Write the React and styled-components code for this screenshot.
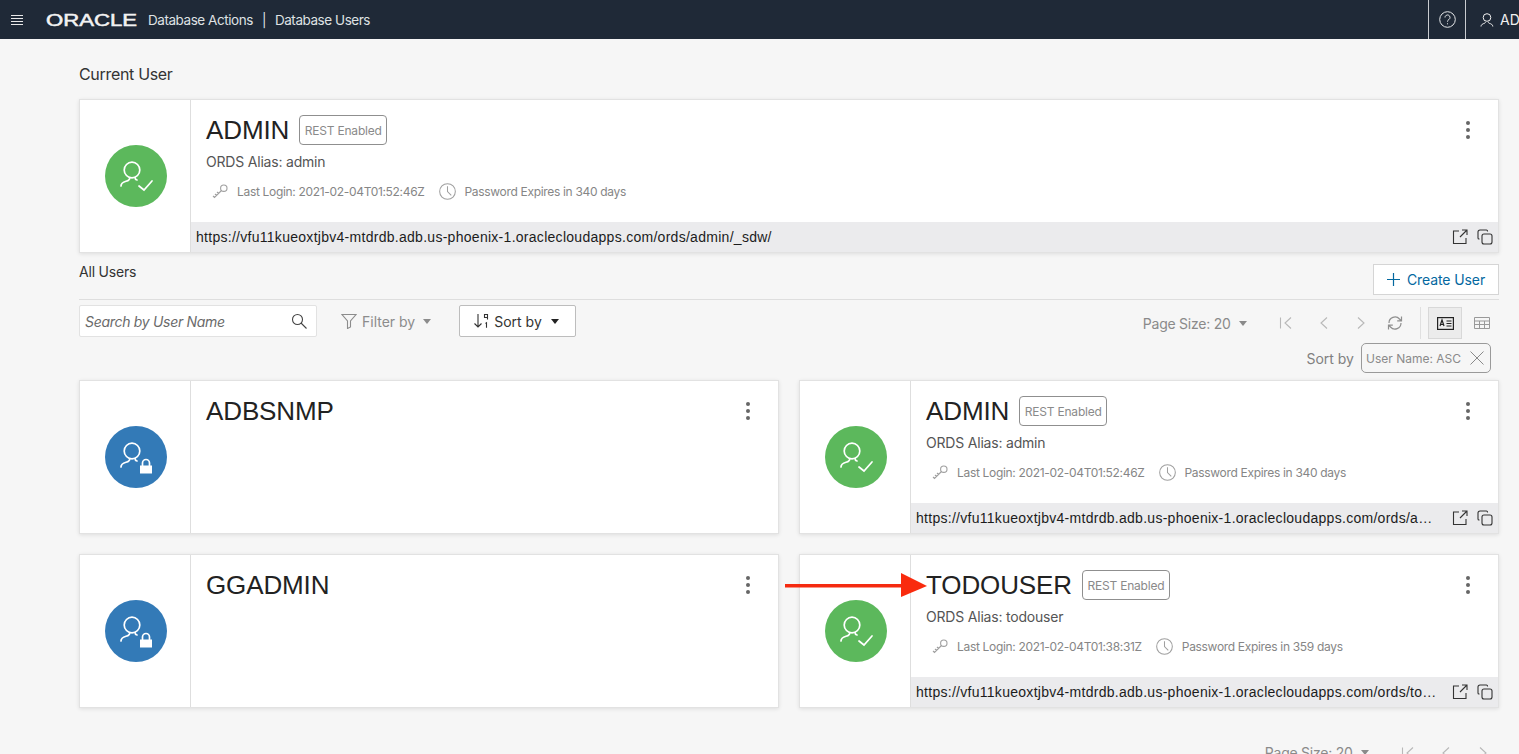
import styled, { createGlobalStyle } from 'styled-components'

const GlobalStyle = createGlobalStyle`
  html, body {
    margin: 0;
    height: 754px;
    overflow: hidden;
    background: #f6f6f6;
    font-family: Inter, "Liberation Sans", sans-serif;
  }
  * { box-sizing: border-box; }
`

const Header = styled.header`
  height: 39px;
  display: flex;
  align-items: center;
  background: #1f2937;
  color: #e6e8ea;
  overflow: hidden;
`
const Burger = styled.div`
  width: 12px;
  height: 10px;
  margin: 0 23px 0 11px;
  color: #e8e8e8;
  display: flex;
`
const Logo = styled.svg`
  width: 97px;
  height: 14px;
  flex: none;
`
const Crumbs = styled.div`
  margin-left: 5px;
  font-size: 13.5px;
  letter-spacing: -0.45px;
  white-space: pre;
  color: #dfe1e3;
`
const CrumbSep = styled.span`
  margin: 0 9px;
`
const HeaderCell = styled.div`
  height: 39px;
  flex: none;
  display: flex;
  align-items: center;
  justify-content: center;
  border-left: 1px solid #c9ccd0;
  width: 37px;
  margin-left: auto;
`
const HeaderUser = styled.div`
  flex: none;
  display: flex;
  align-items: center;
  gap: 6px;
  padding-left: 14px;
  height: 39px;
  width: 54px;
  border-left: 1px solid #c9ccd0;
  font-size: 14px;
  color: #f0f0f0;
`
const Main = styled.main`
  padding: 0 20px 0 79px;
`
const SectionTitle = styled.div`
  margin-top: 25px;
  margin-bottom: 15px;
  height: 20px;
  font-size: 16px;
  line-height: 20px;
  letter-spacing: -0.32px;
  color: #333;
`
const Card = styled.article`
  position: relative;
  height: 154px;
  display: flex;
  background: #fff;
  border: 1px solid #e2e2e2;
  box-shadow: 0 1px 4px rgba(0, 0, 0, 0.1);
`
const AvatarPane = styled.div`
  flex: none;
  width: 111px;
  padding-left: 2px;
  display: flex;
  align-items: center;
  justify-content: center;
  border-right: 1px solid #dedede;
`
const Avatar = styled.div`
  width: 62px;
  height: 62px;
  border-radius: 50%;
  background: ${(p) => (p.$locked ? '#337ab7' : '#5cb85c')};
`
const CardMain = styled.div`
  flex: 1;
  min-width: 0;
  display: flex;
  flex-direction: column;
`
const CardBody = styled.div`
  position: relative;
  flex: 1;
  padding: 15px 15px 0;
`
const TitleRow = styled.div`
  display: flex;
  align-items: center;
  gap: 10px;
  height: 30px;
`
const UserName = styled.h2`
  margin: 0;
  font-family: "Liberation Sans", Arial, sans-serif;
  font-size: 26px;
  font-weight: 400;
  line-height: 32px;
  letter-spacing: -0.12px;
  color: #222;
`
const Badge = styled.span`
  height: 30px;
  width: 88px;
  display: flex;
  align-items: center;
  justify-content: center;
  border: 1px solid #8f8f8f;
  border-radius: 4px;
  font-size: 12px;
  letter-spacing: -0.2px;
  color: #8a8a8a;
`
const Alias = styled.div`
  margin-top: 7px;
  height: 20px;
  font-size: 14px;
  line-height: 20px;
  letter-spacing: -0.2px;
  color: #555;
`
const MetaRow = styled.div`
  margin-top: 11px;
  padding-left: 6px;
  display: flex;
  align-items: center;
  font-size: 12px;
  letter-spacing: -0.32px;
  color: #868686;
`
const MetaItem = styled.span`
  display: flex;
  align-items: center;
  gap: 9px;
  margin-right: 14px;
  & > svg {
    color: #a0a0a0;
  }
`
const Kebab = styled.button`
  position: absolute;
  top: 21px;
  right: 26px;
  width: 8px;
  height: 18px;
  padding: 0;
  border: 0;
  background: none;
  display: flex;
  flex-direction: column;
  align-items: center;
  justify-content: space-between;
  & > i {
    width: 4px;
    height: 4px;
    border-radius: 50%;
    background: #666;
  }
`
const UrlBar = styled.div`
  flex: none;
  height: 30px;
  display: flex;
  align-items: center;
  padding: 0 5px;
  background: #ebebed;
`
const UrlText = styled.span`
  flex: 1;
  min-width: 0;
  overflow: hidden;
  text-overflow: ellipsis;
  white-space: nowrap;
  font-family: "Liberation Sans", Arial, sans-serif;
  font-size: 14px;
  letter-spacing: 0.28px;
  color: #1c1c1c;
`
const UrlActions = styled.div`
  flex: none;
  display: flex;
  align-items: center;
  gap: 9px;
  margin-left: 14px;
  color: #333;
`
const UsersHead = styled.div`
  margin-top: 11px;
  padding-bottom: 4px;
  display: flex;
  justify-content: space-between;
  align-items: flex-start;
  border-bottom: 1px solid #dedede;
`
const UsersLabel = styled.div`
  font-size: 14px;
  line-height: 16px;
  letter-spacing: -0.2px;
  color: #333;
`
const CreateButton = styled.button`
  width: 126px;
  height: 31px;
  display: flex;
  align-items: center;
  justify-content: center;
  gap: 7px;
  background: #fff;
  border: 1px solid #d5d5d5;
  font-family: inherit;
  font-size: 14px;
  letter-spacing: -0.1px;
  color: #04689f;
`
const Toolbar = styled.div`
  margin-top: 5px;
  display: flex;
  align-items: flex-start;
  height: 34px;
`
const SearchBox = styled.div`
  width: 238px;
  height: 32px;
  display: flex;
  align-items: center;
  justify-content: space-between;
  padding: 0 9px 0 5px;
  background: #fff;
  border: 1px solid #e2e2e2;
  border-radius: 2px;
  font-size: 14px;
  font-style: italic;
  letter-spacing: -0.3px;
  color: #6a6a6a;
`
const SearchGlyph = styled.span`
  color: #444;
`
const FilterBy = styled.div`
  margin-left: 24px;
  height: 32px;
  display: flex;
  align-items: center;
  font-size: 14px;
  color: #8c8c8c;
`
const FilterLabel = styled.span`
  margin-left: 5px;
`
const SortButton = styled.button`
  margin-left: 28px;
  width: 117px;
  height: 32px;
  padding: 0 0 0 12px;
  display: flex;
  align-items: center;
  background: #fff;
  border: 1px solid #bdbdbd;
  border-radius: 2px;
  font-family: inherit;
  font-size: 14px;
  color: #333;
`
const SortLabel = styled.span`
  margin-left: 4px;
`
const Caret = styled.i`
  display: inline-block;
  width: 0;
  height: 0;
  margin-left: ${(p) => p.$gap}px;
  border-left: 4.5px solid transparent;
  border-right: 4.5px solid transparent;
  border-top: 5px solid ${(p) => p.$color};
`
const Pager = styled.div`
  margin-left: auto;
  height: 34px;
  padding-top: 2px;
  display: flex;
  align-items: center;
  color: #b3b3b3;
`
const PageSize = styled.span`
  display: flex;
  align-items: center;
  margin-right: 21px;
  font-size: 14px;
  letter-spacing: -0.25px;
  color: #8a8a8a;
`
const PagerButton = styled.span`
  width: ${(p) => p.$width || 37.5}px;
  display: flex;
  justify-content: center;
  color: ${(p) => p.$color || '#b8b8b8'};
`
const PagerDivider = styled.span`
  width: 1px;
  height: 32px;
  margin: 0 7px 0 9.5px;
  background: #e0e0e0;
`
const ViewButton = styled.span`
  width: 34px;
  height: 32px;
  display: flex;
  align-items: center;
  justify-content: center;
  border: 1px solid ${(p) => (p.$active ? '#d8d8d8' : 'transparent')};
  background: ${(p) => (p.$active ? '#ececec' : 'transparent')};
  color: ${(p) => (p.$active ? '#222' : '#999')};
  margin-right: ${(p) => (p.$active ? 3 : 0)}px;
`
const SortRow = styled.div`
  margin-top: 4px;
  padding-right: 8px;
  display: flex;
  justify-content: flex-end;
  align-items: center;
  gap: 7px;
  font-size: 14px;
  color: #808080;
`
const SortChip = styled.div`
  width: 130px;
  height: 30px;
  display: flex;
  align-items: center;
  justify-content: space-between;
  padding: 0 6px 0 4px;
  border: 1px solid #9a9a9a;
  border-radius: 5px;
  font-size: 12px;
  color: #8a8a8a;
`
const UserGrid = styled.div`
  margin-top: 7px;
  display: grid;
  grid-template-columns: 700px 700px;
  column-gap: 20px;
  row-gap: 20px;
`
const Arrow = styled.svg`
  position: absolute;
  left: -15px;
  top: 17px;
  width: 142px;
  height: 28px;
`
const Footer = styled.div`
  margin-top: 36px;
  margin-right: -3px;
  display: flex;
  justify-content: flex-end;
  align-items: center;
  color: #b8b8b8;
`
const Icon = ({ size = 16, w, h, children, view, sw = 1.1 }) => (
  <svg
    width={w || size}
    height={h || size}
    viewBox={view || '0 0 16 16'}
    fill="none"
    stroke="currentColor"
    strokeWidth={sw}
    style={{ flex: 'none', display: 'block' }}
  >
    {children}
  </svg>
)

const AvatarIcon = ({ locked }) => (
  <svg width="62" height="62" viewBox="0 0 62 62" fill="none" stroke="#fff" strokeWidth="1.7" strokeLinecap="round">
    <circle cx="27" cy="25" r="7.8" />
    <path d="M16 41c0-2.500 2.500-4 5-4.700 2.500-.7 4-1.300 3.800-3.800M30 32.600c0 1.300.8 2.100 2 2.400" />
    {locked ? (
      <>
        <rect x="35" y="39.500" width="12" height="8" fill="#fff" stroke="none" />
        <path d="M37.500 40v-3a3.500 3.500 0 0 1 7 0v3" />
      </>
    ) : (
      <path d="M34 41l5 4 8-9" />
    )}
  </svg>
)

const KeyIcon = () => (
  <Icon>
    <circle cx="11.800" cy="4.200" r="3.200" />
    <path d="M9.500 6.500L2.500 13.500 1 12M4.500 11.500L3 10M6.500 9.500L5 8" />
  </Icon>
)
const ClockIcon = () => (
  <Icon size={17} view="0 0 18 18">
    <circle cx="9" cy="9" r="8.300" />
    <path d="M9 3.500V9l4 4" />
  </Icon>
)
const OpenIcon = () => (
  <Icon>
    <path d="M7 2.500H1.500v12.500h12.500V9.500M8 8.500L15 1.500M10 1.500h5v5" transform="translate(0 -.5)" />
  </Icon>
)
const CopyIcon = () => (
  <Icon>
    <rect x="5" y="5" width="10" height="10" rx="2" />
    <path d="M10.500 2.500V2a1 1 0 0 0-1-1H3a2 2 0 0 0-2 2v6a1 1 0 0 0 1 1h.5" />
  </Icon>
)
const FirstIcon = () => (
  <Icon><path d="M2.500 2.500v11M13 2.500L7 8l6 5.500" /></Icon>
)
const PrevIcon = () => (
  <Icon><path d="M11 2.500L5 8l6 5.500" /></Icon>
)
const NextIcon = () => (
  <Icon><path d="M5 2.500L11 8l-6 5.500" /></Icon>
)

const UserCard = ({ user, arrow }) => (
  <Card>
    <AvatarPane>
      <Avatar $locked={!user.alias}>
        <AvatarIcon locked={!user.alias} />
      </Avatar>
    </AvatarPane>
    <CardMain>
      <CardBody>
        <TitleRow>
          <UserName>{user.name}</UserName>
          {user.alias && <Badge>REST Enabled</Badge>}
        </TitleRow>
        {user.alias && (
          <>
            <Alias>ORDS Alias: {user.alias}</Alias>
            <MetaRow>
              <MetaItem>
                <KeyIcon />
                Last Login: {user.login}
              </MetaItem>
              <MetaItem>
                <ClockIcon />
                Password Expires in {user.days} days
              </MetaItem>
            </MetaRow>
          </>
        )}
        <Kebab aria-label="Actions">
          <i />
          <i />
          <i />
        </Kebab>
      </CardBody>
      {user.alias && (
        <UrlBar>
          <UrlText>{`https://vfu11kueoxtjbv4-mtdrdb.adb.us-phoenix-1.oraclecloudapps.com/ords/${user.alias}/_sdw/`}</UrlText>
          <UrlActions>
            <OpenIcon />
            <CopyIcon />
          </UrlActions>
        </UrlBar>
      )}
    </CardMain>
    {arrow && (
      <Arrow viewBox="0 0 142 28">
        <path d="M1 13h116V14.500H1z" stroke="#f52a10" strokeWidth="2" fill="#f52a10" />
        <path d="M116 1l26 13-26 11z" fill="#f92b0e" />
      </Arrow>
    )}
  </Card>
)

const admin = { name: 'ADMIN', alias: 'admin', login: '2021-02-04T01:52:46Z', days: 340 }
const users = [
  { name: 'ADBSNMP' },
  admin,
  { name: 'GGADMIN' },
  { name: 'TODOUSER', alias: 'todouser', login: '2021-02-04T01:38:31Z', days: 359 },
]

export default function App() {
  return (
    <>
      <GlobalStyle />
      <Header>
        <Burger>
          <Icon w={12} h={10} view="0 0 12 10" sw={1}>
            <path d="M0 .5h12M0 3.500h12M0 6.500h12M0 9.500h12" />
          </Icon>
        </Burger>
        <Logo viewBox="0 0 97 14">
          <text
            x="0"
            y="12.500"
            textLength="91"
            lengthAdjust="spacingAndGlyphs"
            fontFamily="Liberation Sans, sans-serif"
            fontSize="16"
            stroke="#f2f2f2"
            strokeWidth="0.5"
            fill="#f2f2f2"
          >
            ORACLE
          </text>
        </Logo>
        <Crumbs>
          Database Actions<CrumbSep>|</CrumbSep>Database Users
        </Crumbs>
        <HeaderCell>
          <Icon size={17} view="0 0 17 17" sw={1}>
            <circle cx="8.500" cy="8.500" r="7.800" />
            <path d="M6 6.500a2.500 2.500 0 1 1 3.800 2.100c-.9.600-1.300 1-1.300 2.100M8.500 12.300v1" />
          </Icon>
        </HeaderCell>
        <HeaderUser>
          <Icon size={14} view="0 0 14 14" sw={1}>
            <circle cx="7" cy="4.500" r="3.800" />
            <path d="M1 13.500c0-2 2-2.800 3.500-3.200.8-.2 1-.8.800-1.500M12.800 13.500c0-2-2-2.800-3.500-3.200-.8-.2-1-.8-.8-1.500" />
          </Icon>
          AD
        </HeaderUser>
      </Header>
      <Main>
        <SectionTitle>Current User</SectionTitle>
        <UserCard user={admin} />
        <UsersHead>
          <UsersLabel>All Users</UsersLabel>
          <CreateButton>
            <Icon size={13} view="0 0 13 13" sw={1.2}>
              <path d="M6.500 0v13M0 6.500h13" />
            </Icon>
            Create User
          </CreateButton>
        </UsersHead>
        <Toolbar>
          <SearchBox>
            Search by User Name
            <SearchGlyph>
              <Icon>
                <circle cx="6.500" cy="6.500" r="5" />
                <path d="M10 10l5.500 5.500" />
              </Icon>
            </SearchGlyph>
          </SearchBox>
          <FilterBy>
            <Icon>
              <path d="M1 1.500h14L9.500 8v6l-3 1.500V8z" />
            </Icon>
            <FilterLabel>Filter by</FilterLabel>
            <Caret $gap={8} $color="#8c8c8c" />
          </FilterBy>
          <SortButton>
            <Icon size={18} view="0 0 18 18">
              <path d="M6 2v13M2.500 11.500L6 15l3.500-3.500" />
              <path d="M12.500 2.500h3v3h-3zM15.500 5.500v2M13.500 11.500l1-.7v5" />
            </Icon>
            <SortLabel>Sort by</SortLabel>
            <Caret $gap={9} $color="#222" />
          </SortButton>
          <Pager>
            <PageSize>
              Page Size: 20
              <Caret $gap={8} $color="#8a8a8a" />
            </PageSize>
            <PagerButton><FirstIcon /></PagerButton>
            <PagerButton><PrevIcon /></PagerButton>
            <PagerButton><NextIcon /></PagerButton>
            <PagerButton $color="#8f8f8f" $width={30.5}>
              <Icon sw={1.2}>
                <path d="M2 8a6 6 0 0 1 10.500-4l1.500 1.500M14 8a6 6 0 0 1-10.500 4L2 10.500M14.500 1.500v4.300h-4.300M1.500 14.500v-4.300h4.300" />
              </Icon>
            </PagerButton>
            <PagerDivider />
            <ViewButton $active>
              <Icon w={17} h={13} view="0 0 17 13" sw={1.2}>
                <rect x=".6" y=".6" width="15.800" height="11.800" />
                <path d="M3 9l2-6 2 6M3.700 7.500h2.600M9.500 4h5M9.500 6.500h5M9.500 9h5" />
              </Icon>
            </ViewButton>
            <ViewButton>
              <Icon w={16} h={12} view="0 0 16 12" sw={1}>
                <path d="M.5.500h15v11H.5zM.5 4h15M.5 7.500h15M5.500 4v7.500M10.500 4v7.500" />
              </Icon>
            </ViewButton>
          </Pager>
        </Toolbar>
        <SortRow>
          Sort by
          <SortChip>
            User Name: ASC
            <Icon size={14} view="0 0 14 14" sw={1}>
              <path d="M.5.500l13 13M13.500.500l-13 13" />
            </Icon>
          </SortChip>
        </SortRow>
        <UserGrid>
          {users.map((user) => (
            <UserCard key={user.name} user={user} arrow={user.name === 'TODOUSER'} />
          ))}
        </UserGrid>
        <Footer>
          <PageSize>
            Page Size: 20
            <Caret $gap={8} $color="#8a8a8a" />
          </PageSize>
          <PagerButton><FirstIcon /></PagerButton>
          <PagerButton><PrevIcon /></PagerButton>
          <PagerButton><NextIcon /></PagerButton>
        </Footer>
      </Main>
    </>
  )
}
